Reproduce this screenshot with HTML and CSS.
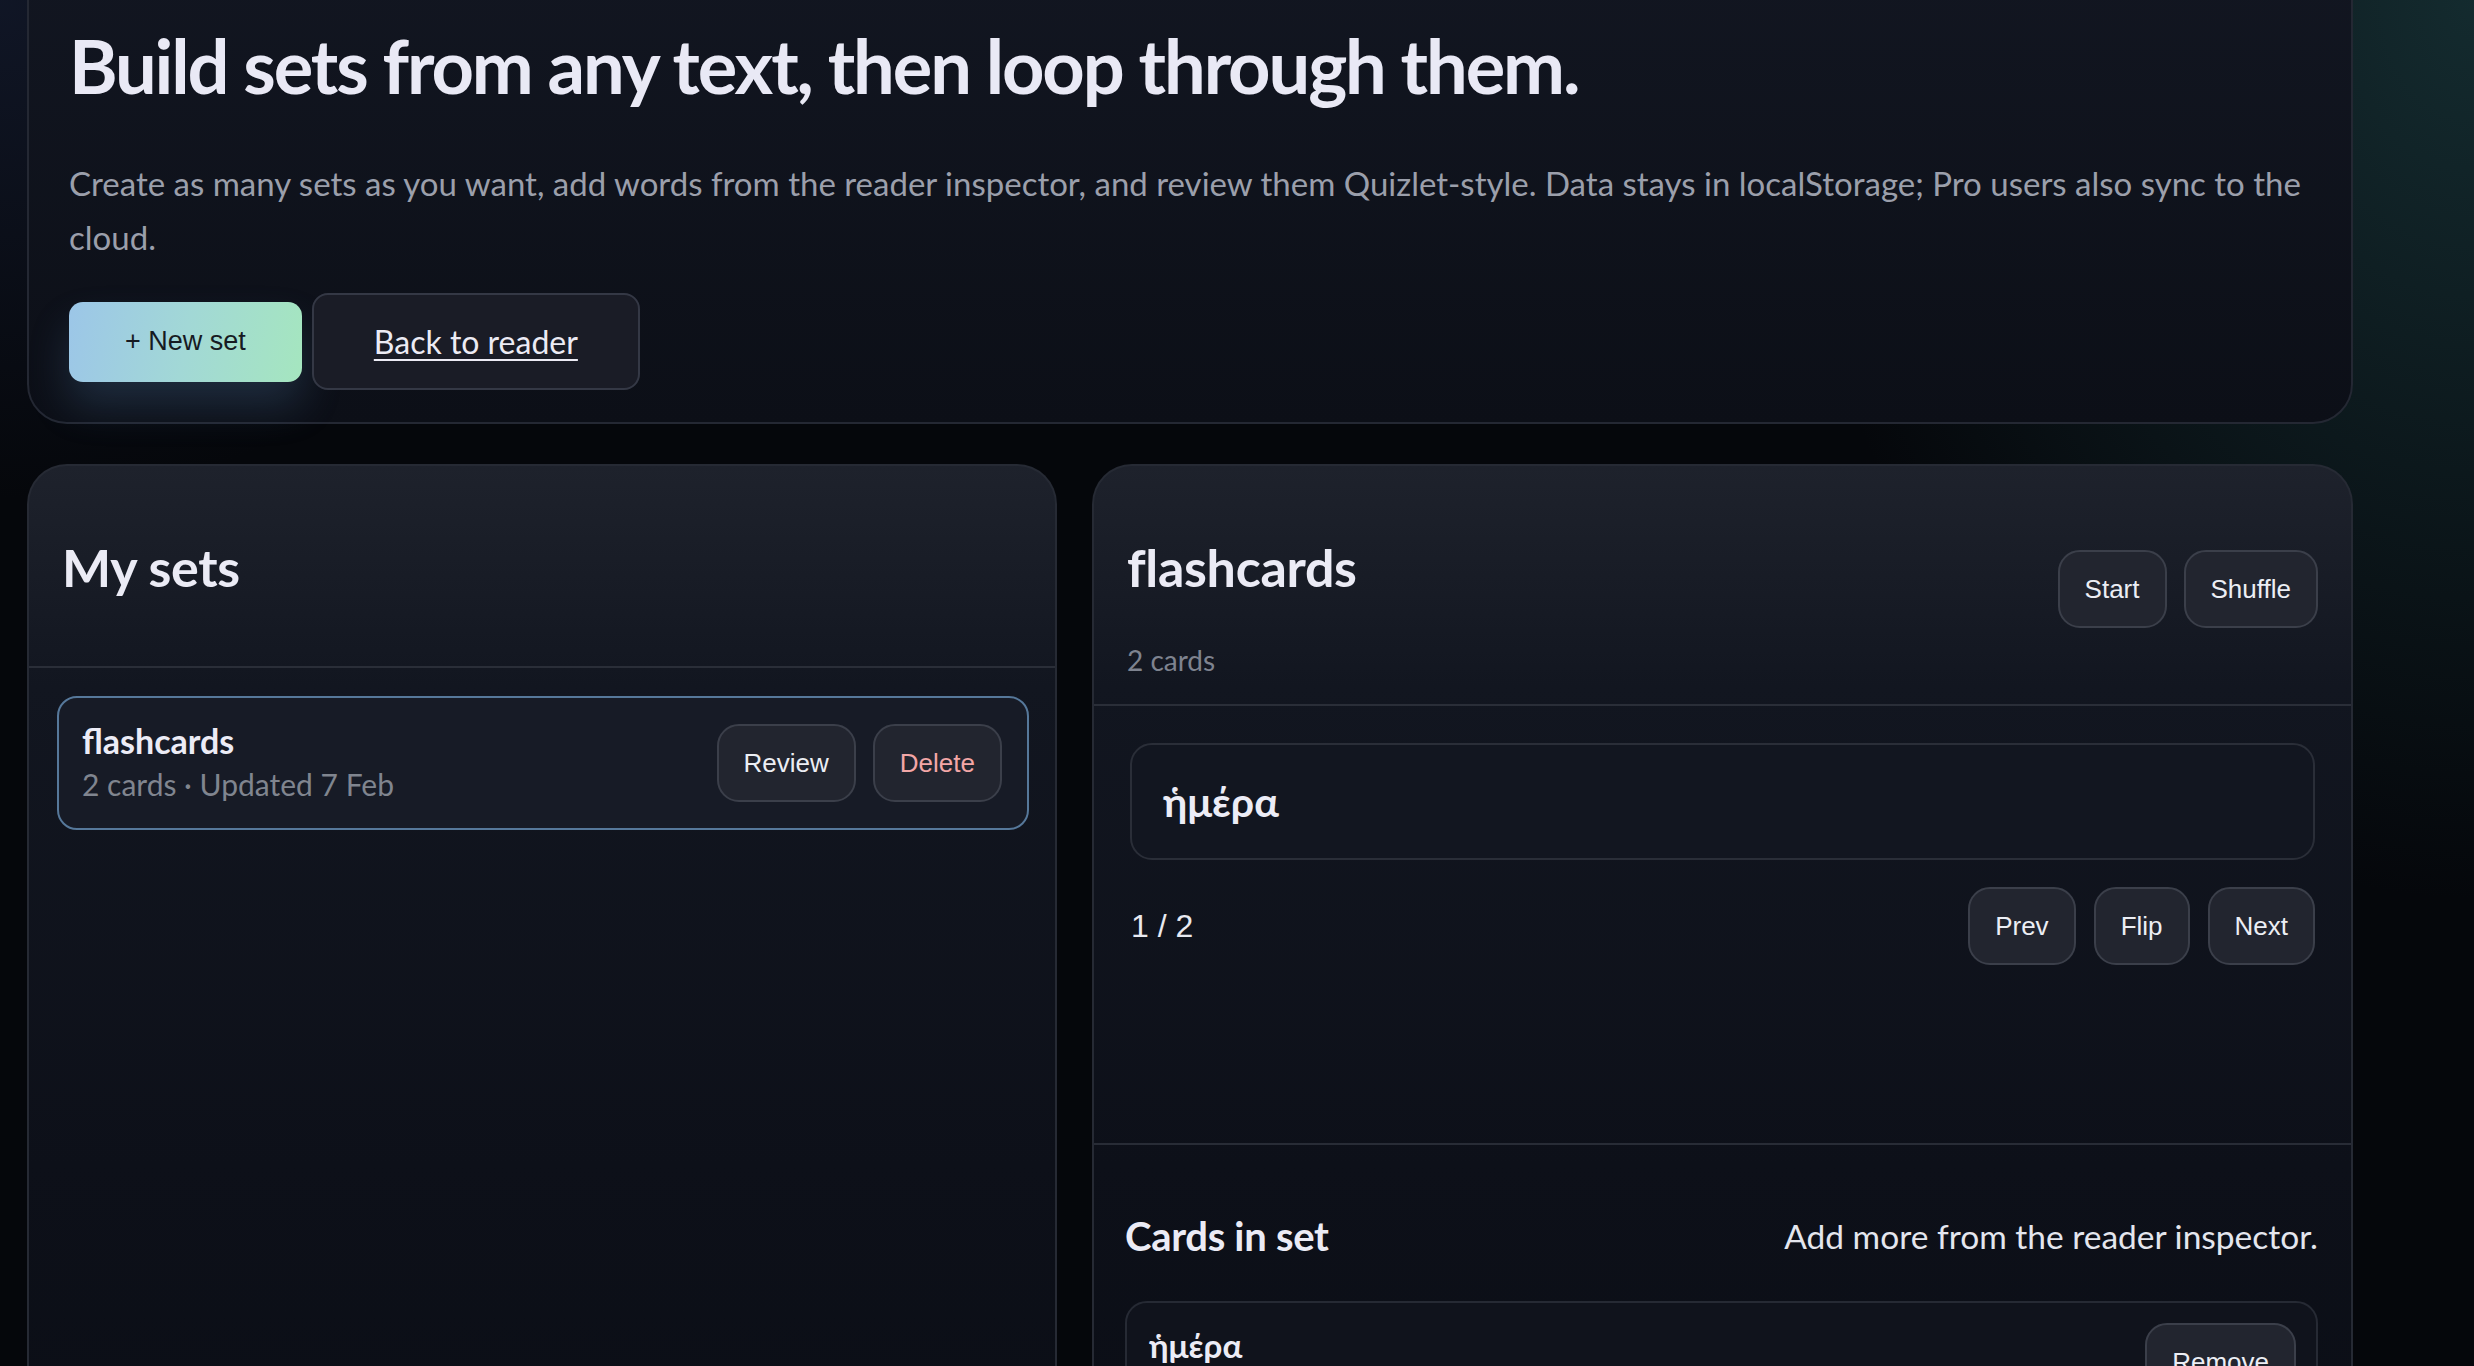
FILE: index.html
```html
<!DOCTYPE html>
<html lang="en">
<head>
<meta charset="utf-8">
<title>Flashcard sets</title>
<link rel="stylesheet" href="styles.css">
</head>
<body>
<main class="page">
  <section class="hero">
    <h1 class="hero-title">Build sets from any text, then loop through them.</h1>
    <p class="hero-text">Create as many sets as you want, add words from the reader inspector, and review them Quizlet-style. Data stays in localStorage; Pro users also sync to the cloud.</p>
    <div class="hero-actions">
      <button class="btn-primary">+ New set</button>
      <a class="btn-link" href="#">Back to reader</a>
    </div>
  </section>

  <div class="grid">
    <section class="panel">
      <header class="panel-head panel-head-left">
        <h2 class="panel-title">My sets</h2>
      </header>
      <div class="set-list">
        <div class="set-item">
          <div class="set-info">
            <div class="set-name">flashcards</div>
            <div class="set-meta">2 cards · Updated 7 Feb</div>
          </div>
          <div class="btn-group">
            <button class="btn">Review</button>
            <button class="btn btn-danger">Delete</button>
          </div>
        </div>
      </div>
    </section>

    <section class="panel">
      <header class="panel-head">
        <div class="head-row">
          <h2 class="panel-title">flashcards</h2>
          <div class="btn-group">
            <button class="btn">Start</button>
            <button class="btn">Shuffle</button>
          </div>
        </div>
        <div class="panel-sub">2 cards</div>
      </header>
      <div class="study">
        <div class="flash">ἡμέρα</div>
        <div class="controls">
          <span class="counter">1 / 2</span>
          <div class="btn-group">
            <button class="btn">Prev</button>
            <button class="btn">Flip</button>
            <button class="btn">Next</button>
          </div>
        </div>
      </div>
      <div class="cards-section">
        <div class="cards-head">
          <h3 class="cards-title">Cards in set</h3>
          <span class="cards-hint">Add more from the reader inspector.</span>
        </div>
        <div class="card-row">
          <div class="card-term">ἡμέρα</div>
          <button class="btn">Remove</button>
        </div>
      </div>
    </section>
  </div>
</main>
</body>
</html>
```
FILE: styles.css
```css
html, body {
  margin: 0;
  height: 100%;
}
body {
  overflow: hidden;
  background:
    radial-gradient(ellipse 700px 900px at 100% 0%, rgba(32, 72, 76, 0.55), rgba(32, 72, 76, 0) 100%),
    radial-gradient(ellipse 600px 500px at 0% 0%, rgba(30, 40, 70, 0.45), rgba(30, 40, 70, 0) 100%),
    #05070b;
  font-family: "Lato", "Noto Sans", sans-serif;
  color: #e9e9f4;
}
.page {
  width: 2326px;
  margin: -40px 0 0 27px;
}
.hero {
  border: 2px solid #242833;
  border-radius: 40px;
  background: linear-gradient(180deg, #121621 0%, #0c0f17 100%);
  padding: 62px 40px 32px;
}
.hero-title {
  margin: 0;
  font-size: 74px;
  line-height: 84px;
  font-weight: 700;
  color: #e9e9f5;
  letter-spacing: -2.1px;
}
.hero-text {
  margin: 48px 0 0;
  font-size: 33px;
  line-height: 54px;
  color: #9b9fab;
}
.hero-actions {
  margin-top: 29px;
  display: flex;
  align-items: center;
  gap: 10px;
}
.btn-primary {
  height: 80px;
  padding: 0 56px;
  border: 0;
  border-radius: 14px;
  background: linear-gradient(100deg, #9cc6e8 0%, #a2d8d6 50%, #a5e6bf 100%);
  color: #161a22;
  font-family: "Liberation Sans", Arial, sans-serif;
  font-size: 27px;
  box-shadow: 0 24px 40px rgba(90, 140, 190, 0.22);
}
.btn-link {
  display: flex;
  align-items: center;
  height: 93px;
  padding: 0 60px;
  border: 2px solid #343845;
  border-radius: 16px;
  background: #1a1c26;
  color: #ecebf4;
  font-size: 32px;
  text-decoration: underline;
  text-underline-offset: 5px;
  text-decoration-thickness: 2px;
}
.grid {
  margin-top: 40px;
  display: grid;
  grid-template-columns: 1030px 1261px;
  gap: 35px;
  height: 1000px;
}
.panel {
  border: 2px solid #262a34;
  border-bottom: 0;
  border-radius: 40px 40px 0 0;
  background: linear-gradient(180deg, #1e222c 0px, #121620 220px, #0d1019 700px, #0b0e16 100%);
}
.panel-head {
  padding: 72px 33px 24px;
  border-bottom: 2px solid #2a2e38;
}
.panel-head-left {
  padding-bottom: 26px;
}
.head-row {
  display: flex;
  align-items: center;
  justify-content: space-between;
}
.panel-title {
  margin: 0 0 44px;
  font-size: 52px;
  line-height: 58px;
  font-weight: 700;
  color: #ebebf5;
  letter-spacing: -0.3px;
}
.panel-sub {
  font-size: 28px;
  line-height: 40px;
  color: #7e838f;
}
.btn-group {
  display: flex;
  gap: 17px;
}
.btn {
  height: 78px;
  padding: 0 25px;
  border: 2px solid #3b3f4a;
  border-radius: 22px;
  background: #22252f;
  color: #eceef4;
  font-family: "Liberation Sans", Arial, sans-serif;
  font-size: 26px;
}
.btn-danger {
  color: #f3a6a6;
}
.set-list {
  padding: 28px 26px 0 28px;
}
.set-item {
  display: flex;
  align-items: center;
  justify-content: space-between;
  padding: 22px 25px 22px 23px;
  border: 2px solid #56789a;
  border-radius: 20px;
  background: #171b26;
}
.set-name {
  font-size: 34px;
  line-height: 42px;
  font-weight: 700;
  color: #ececf6;
}
.set-meta {
  font-size: 30px;
  line-height: 44px;
  color: #80858f;
}
.study {
  min-height: 400px;
  padding: 37px 36px 0;
  border-bottom: 2px solid #282c36;
}
.flash {
  padding: 0 31px;
  height: 113px;
  display: flex;
  align-items: center;
  border: 2px solid #2a2e38;
  border-radius: 22px;
  background: #121620;
  font-size: 41px;
  font-weight: 700;
  color: #ececf6;
}
.controls {
  margin-top: 27px;
  display: flex;
  align-items: center;
  justify-content: space-between;
}
.controls .btn-group {
  gap: 18px;
}
.counter {
  font-family: "Liberation Sans", Arial, sans-serif;
  font-size: 32px;
  color: #e8e9f0;
  padding-left: 1px;
}
.cards-section {
  padding: 66px 33px 0 31px;
}
.cards-head {
  display: flex;
  align-items: center;
  justify-content: space-between;
  margin-bottom: 40px;
}
.cards-title {
  margin: 0;
  font-size: 40px;
  line-height: 50px;
  font-weight: 700;
  color: #ebebf5;
  letter-spacing: -0.3px;
}
.cards-hint {
  font-size: 33.5px;
  color: #e4e6ee;
}
.card-row {
  display: flex;
  align-items: flex-start;
  justify-content: space-between;
  padding: 20px 20px 20px 22px;
  border: 2px solid #262a34;
  border-radius: 22px;
  background: #10131c;
}
.card-term {
  font-size: 33px;
  line-height: 44px;
  font-weight: 700;
  color: #ececf6;
}
```
